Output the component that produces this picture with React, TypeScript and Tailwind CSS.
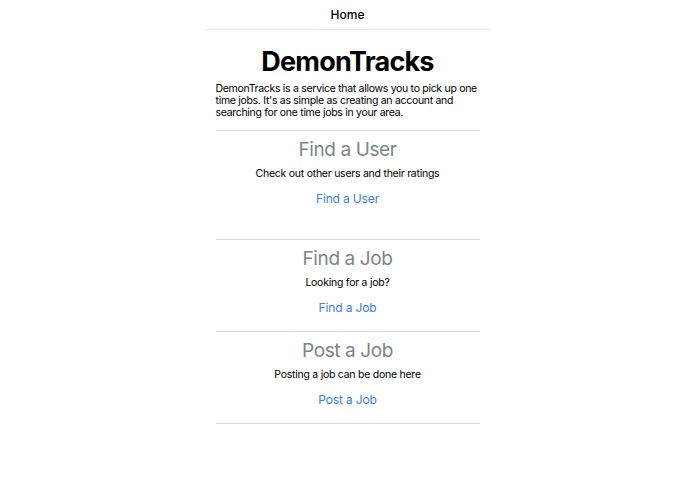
export default function App() {
  const sections = [
    { title: "Find a User", text: "Check out other users and their ratings", link: "Find a User", tall: true },
    { title: "Find a Job", text: "Looking for a job?", link: "Find a Job" },
    { title: "Post a Job", text: "Posting a job can be done here", link: "Post a Job" },
  ];
  return (
    <div className="min-h-screen bg-white text-black" style={{ fontFamily: "Inter, 'Noto Sans', sans-serif" }}>
      <nav className="mx-auto w-[285px] border-b border-[#e6e6e6] h-[30px] flex items-center justify-center">
        <span className="text-[12px] font-medium">Home</span>
      </nav>
      <main className="mx-auto w-[264px]">
        <h1 className="text-center text-[27px] font-bold leading-[34px] tracking-[-0.8px] mt-[15px]">DemonTracks</h1>
        <p className="text-[10.5px] leading-[12px] tracking-[-0.3px] mt-[4px] pb-[11px]">
          DemonTracks is a service that allows you to pick up one time jobs. It's as simple as creating an account and
          searching for one time jobs in your area.
        </p>
        {sections.map((s) => (
          <section
            key={s.title}
            className={`border-t border-[#dcdcdc] flex flex-col items-center ${s.tall ? "h-[109px]" : "h-[92px]"}`}
          >
            <h2 className="text-[19px] leading-[24px] tracking-[-0.4px] text-[#7b8585] mt-[7px]">{s.title}</h2>
            <p className="text-[10.5px] leading-[14px] tracking-[-0.25px] mt-[5px]">{s.text}</p>
            <a href="#" className="text-[12px] leading-[16px] tracking-[-0.15px] text-[#3a7ff0] mt-[10px]">
              {s.link}
            </a>
          </section>
        ))}
        <div className="border-t border-[#dcdcdc]" />
      </main>
    </div>
  );
}
